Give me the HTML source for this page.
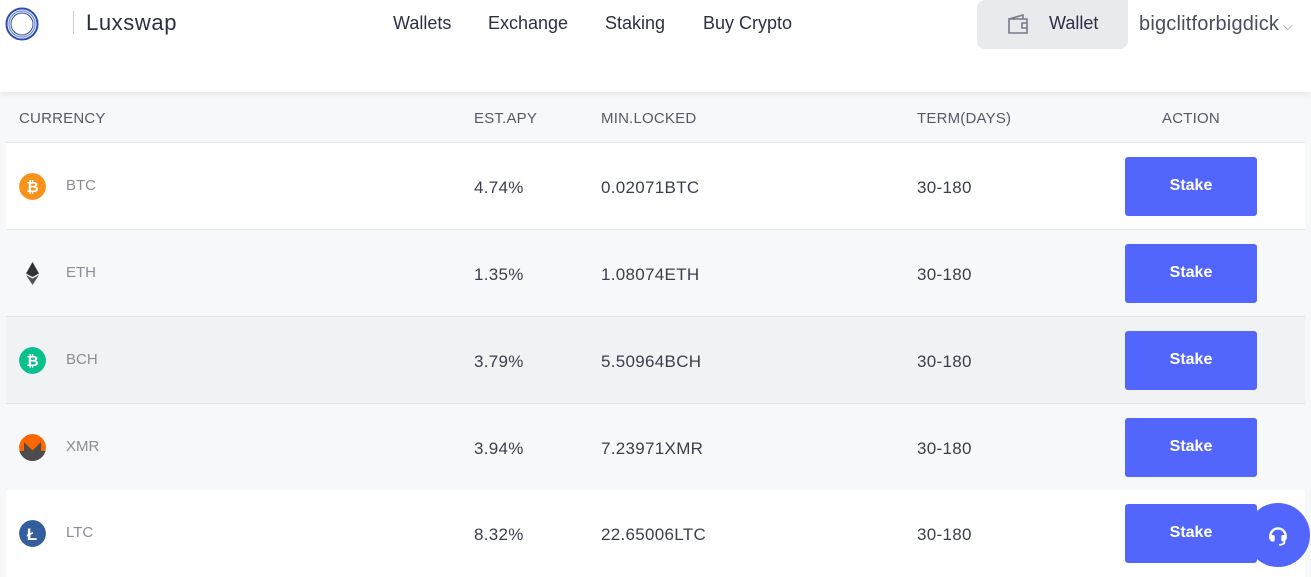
<!DOCTYPE html>
<html><head><meta charset="utf-8"><style>
*{margin:0;padding:0;box-sizing:border-box}
body{width:1311px;height:573px;overflow:hidden;background:#f7f8fa;font-family:"Liberation Sans",sans-serif;position:relative}
.hdr{position:absolute;left:0;top:0;width:1311px;height:92px;background:#fff;box-shadow:0 2px 6px rgba(0,0,0,.08);z-index:2}
.brand{position:absolute;left:86px;top:10px;font-size:22px;color:#2b3044;letter-spacing:.6px}
.sep{position:absolute;left:73px;top:11px;width:1px;height:23px;background:#ccc}
.nav{position:absolute;top:13px;font-size:18px;color:#2b3044}
.wbtn{position:absolute;left:977px;top:0;width:151px;height:49px;background:#e9eaee;border-radius:0 0 8px 8px;border-top-left-radius:8px}
.wbtn span{position:absolute;left:72px;top:13px;font-size:18px;color:#2b3044}
.user{position:absolute;left:1139px;top:13px;font-size:20px;color:#4a4e5c;letter-spacing:.2px}
.th{position:absolute;top:110px;font-size:15px;color:#555a66;letter-spacing:.2px}
.row{position:absolute;left:6px;width:1299px;height:87px;border-bottom:1px solid #e3e4ea}
.row div{position:absolute;top:35px;font-size:17px;color:#3b3f4c;letter-spacing:.3px}
.row .sym{left:60px;font-size:15px;color:#8a8c96;top:34px;letter-spacing:0}
.ic{position:absolute;left:13px;top:30px;width:27px;height:27px;border-radius:50%}
.btn{position:absolute;left:1119px !important;top:14px !important;width:132px;height:59px;background:#5266fe;border-radius:3px;color:#fff !important;font-weight:bold;font-size:16px !important;text-align:center;line-height:57px;letter-spacing:0 !important}
</style></head><body>
<div class="hdr">
<svg style="position:absolute;left:4px;top:6px" width="36" height="36" viewBox="0 0 36 36"><circle cx="18" cy="18" r="15.5" fill="none" stroke="#2a4bb0" stroke-width="2"/><circle cx="18" cy="18" r="13" fill="none" stroke="#6a86d8" stroke-width="1.2"/><circle cx="18" cy="18" r="11" fill="none" stroke="#2a4bb0" stroke-width="1"/></svg>
<div class="sep"></div><div class="brand">Luxswap</div>
<div class="nav" style="left:393px">Wallets</div>
<div class="nav" style="left:488px">Exchange</div>
<div class="nav" style="left:605px">Staking</div>
<div class="nav" style="left:703px">Buy Crypto</div>
<div class="wbtn"><svg style="position:absolute;left:30px;top:13px" width="24" height="22" viewBox="0 0 24 22"><path d="M2 6h18v14H2z M2 6l14-4v4 M15 10h5v5h-5z" fill="none" stroke="#777b88" stroke-width="1.6"/></svg><span>Wallet</span></div>
<div class="user">bigclitforbigdick<span style="font-size:13px;color:#888"> ⌵</span></div>
</div>
<div class="th" style="left:19px">CURRENCY</div>
<div class="th" style="left:474px">EST.APY</div>
<div class="th" style="left:601px">MIN.LOCKED</div>
<div class="th" style="left:917px">TERM(DAYS)</div>
<div class="th" style="left:1162px">ACTION</div>
<div style="position:absolute;left:6px;top:142px;width:1299px;height:1px;background:#e3e4ea"></div>

<div class="row" style="top:143px;background:#fff"><svg class="ic" viewBox="0 0 27 27"><circle cx="13.5" cy="13.5" r="13.5" fill="#f7931a"/><text x="13.5" y="19" font-size="15" font-weight="bold" fill="#fff" text-anchor="middle" font-family="Liberation Sans">₿</text></svg><div class="sym">BTC</div><div style="left:468px">4.74%</div><div style="left:595px">0.02071BTC</div><div style="left:911px">30-180</div><div class="btn">Stake</div></div>
<div class="row" style="top:230px;background:#f7f8fa"><svg class="ic" viewBox="0 0 27 27"><path d="M13.5 2 L20 13.5 L13.5 17 L7 13.5z" fill="#333"/><path d="M13.5 18.5 L20 15 L13.5 25 L7 15z" fill="#555"/></svg><div class="sym">ETH</div><div style="left:468px">1.35%</div><div style="left:595px">1.08074ETH</div><div style="left:911px">30-180</div><div class="btn">Stake</div></div>
<div class="row" style="top:317px;background:#f1f2f4"><svg class="ic" viewBox="0 0 27 27"><circle cx="13.5" cy="13.5" r="13.5" fill="#0ac18e"/><text x="13.5" y="19" font-size="15" font-weight="bold" fill="#fff" text-anchor="middle" font-family="Liberation Sans">₿</text></svg><div class="sym">BCH</div><div style="left:468px">3.79%</div><div style="left:595px">5.50964BCH</div><div style="left:911px">30-180</div><div class="btn">Stake</div></div>
<div class="row" style="top:404px;background:#f7f8fa"><svg class="ic" viewBox="0 0 27 27"><circle cx="13.5" cy="13.5" r="13.5" fill="#ff6600"/><path d="M0 17h5v-9l8.5 8.5L22 8v9h5a13.5 13.5 0 0 1-27 0z" fill="#4c4c4c"/></svg><div class="sym">XMR</div><div style="left:468px">3.94%</div><div style="left:595px">7.23971XMR</div><div style="left:911px">30-180</div><div class="btn">Stake</div></div>
<div class="row" style="top:490px;background:#fff;border:none"><svg class="ic" viewBox="0 0 27 27"><circle cx="13.5" cy="13.5" r="13.5" fill="#345d9d"/><text x="13" y="20" font-size="17" font-weight="bold" fill="#fff" text-anchor="middle" font-family="Liberation Sans">Ł</text></svg><div class="sym">LTC</div><div style="left:468px">8.32%</div><div style="left:595px">22.65006LTC</div><div style="left:911px">30-180</div><div class="btn">Stake</div></div>

<div style="position:absolute;left:1246px;top:503px;width:64px;height:64px;border-radius:50%;background:#5266fe"><svg style="position:absolute;left:20px;top:20px" width="24" height="24" viewBox="0 0 22 22"><path d="M4 12a7 7 0 0 1 14 0v3M4 12v3" fill="none" stroke="#fff" stroke-width="2.2"/><rect x="4" y="11" width="4" height="6" rx="1.5" fill="#fff"/><rect x="14" y="11" width="4" height="6" rx="1.5" fill="#fff"/><path d="M17 17q0 3-5 3" fill="none" stroke="#fff" stroke-width="1.6"/></svg></div>
</body></html>
